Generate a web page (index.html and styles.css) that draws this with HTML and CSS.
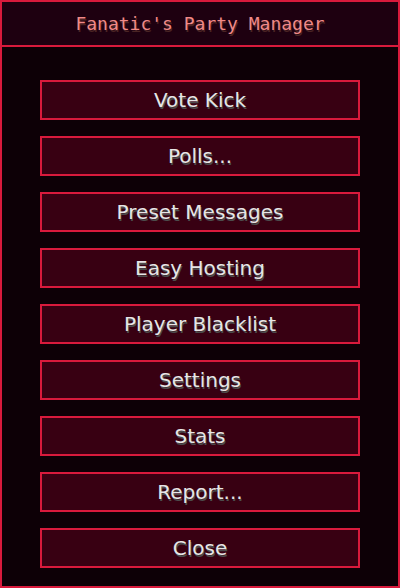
FILE: index.html
```html
<!DOCTYPE html>
<html lang="en">
<head>
    <meta charset="UTF-8">
    <meta name="viewport" content="width=device-width, initial-scale=1.0">
    <title>Fanatic's Party Manager</title>
    <link rel="stylesheet" href="styles.css">
</head>
<body>
    <div class="window">
        <div class="header">Fanatic's Party Manager</div>

        <!-- main menu -->
        <div class="menu">
            <button class="button">Vote Kick</button>
            <button class="button">Polls...</button>
            <button class="button">Preset Messages</button>
            <button class="button">Easy Hosting</button>
            <button class="button">Player Blacklist</button>
            <button class="button">Settings</button>
            <button class="button">Stats</button>
            <button class="button">Report...</button>
            <button class="button">Close</button>
        </div>
    </div>
</body>
</html>
```

FILE: styles.css
```css
body {
    margin: 0;
    background: #0d0006;
    font-family: "DejaVu Sans Mono", monospace;
}

.window {
    width: 400px;
    height: 588px;
    box-sizing: border-box;
    border: 2px solid #d81a3c;
    background: #0d0006;
    display: flex;
    flex-direction: column;
}

.header {
    height: 43px;
    border-bottom: 2px solid #d81a3c;
    background: #1e0010;
    color: #f08a88;
    font-size: 18px;
    display: flex;
    align-items: center;
    justify-content: center;
    text-shadow: 1px 2px 0 #4a2424;
}

.menu {
    display: flex;
    flex-direction: column;
    gap: 16px;
    padding: 33px 38px 0 38px;
}

.button {
    height: 40px;
    width: 100%;
    box-sizing: border-box;
    border: 2px solid #d81a3c;
    background: #380012;
    color: #e6e6e6;
    font-family: "DejaVu Sans", sans-serif;
    font-size: 20px;
    line-height: 1;
    text-shadow: 1px 2px 0 #4c4c4c;
    cursor: pointer;
    padding: 0;
}
```
